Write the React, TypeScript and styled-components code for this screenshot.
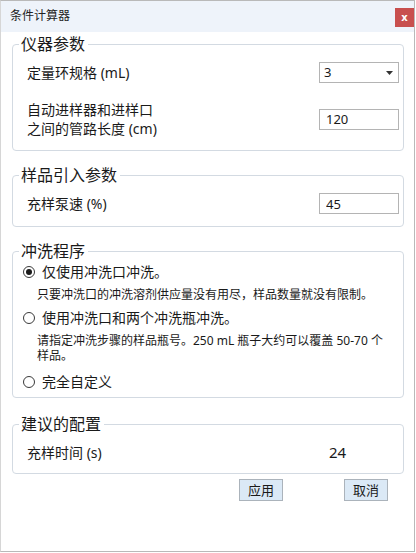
import React, { useState } from "react";
import styled, { createGlobalStyle } from "styled-components";

const GlobalStyle = createGlobalStyle`
    html, body {
        margin: 0;
        padding: 0;
        background: #ffffff;
    }
    body {
        font-family: "Noto Sans", "Noto Sans CJK SC", sans-serif;
        color: #1a1a1a;
    }
`

type Mode = "port" | "bottles" | "custom";

export default function App(){
    const [mode, setMode] = useState<Mode>("port");

    return(
        <>
            <GlobalStyle />
            <Window>
                <TitleBar>
                    <Title>条件计算器</Title>
                    <CloseBtn aria-label="close">x</CloseBtn>
                </TitleBar>

                <Body>
                    <Group $top={2}>
                        <Legend>仪器参数</Legend>
                        <FieldGrid $pt={8} $pb={12} $gap={17}>
                            <Label>定量环规格 (mL)</Label>
                            <Select>
                                <span>3</span>
                                <svg width="7" height="4" viewBox="0 0 7 4">
                                    <path d="M0 0 L7 0 L3.5 4 Z" fill="#333" />
                                </svg>
                            </Select>

                            <Label>自动进样器和进样口<br />之间的管路长度 (cm)</Label>
                            <Input type="text" defaultValue="120" />
                        </FieldGrid>
                    </Group>

                    <Group $top={14}>
                        <Legend>样品引入参数</Legend>
                        <FieldGrid $pt={8} $pb={12} $gap={0}>
                            <Label>充样泵速 (%)</Label>
                            <Input type="text" defaultValue="45" />
                        </FieldGrid>
                    </Group>

                    <Group $top={14}>
                        <Legend>冲洗程序</Legend>
                        <Options>
                            <Option>
                                <RadioLine onClick={() => setMode("port")}>
                                    <Radio $checked={mode === "port"} />
                                    仅使用冲洗口冲洗。
                                </RadioLine>
                                <Desc>只要冲洗口的冲洗溶剂供应量没有用尽，样品数量就没有限制。</Desc>
                            </Option>
                            <Option>
                                <RadioLine onClick={() => setMode("bottles")}>
                                    <Radio $checked={mode === "bottles"} />
                                    使用冲洗口和两个冲洗瓶冲洗。
                                </RadioLine>
                                <Desc>请指定冲洗步骤的样品瓶号。250 mL 瓶子大约可以覆盖 50-70 个样品。</Desc>
                            </Option>
                            <Option $extra={3}>
                                <RadioLine onClick={() => setMode("custom")}>
                                    <Radio $checked={mode === "custom"} />
                                    完全自定义
                                </RadioLine>
                            </Option>
                        </Options>
                    </Group>

                    <Group $top={16}>
                        <Legend>建议的配置</Legend>
                        <FieldGrid $pt={8} $pb={11} $gap={0}>
                            <Label>充样时间 (s)</Label>
                            <Value>24</Value>
                        </FieldGrid>
                    </Group>

                    <Buttons>
                        <Button>应用</Button>
                        <Button>取消</Button>
                    </Buttons>
                </Body>
            </Window>
        </>
    )
}

const Window = styled.div`
    width: 413px;
    height: 550px;
    border: 1px solid #b9b9b9;
    border-left-color: #d6d6d6;
    background: #ffffff;
    display: flex;
    flex-direction: column;
`
const TitleBar = styled.div`
    height: 31px;
    flex: none;
    background: #eef3fa;
    display: flex;
    align-items: flex-start;
    justify-content: space-between;
`
const Title = styled.span`
    font-size: 12px;
    line-height: 16px;
    margin: 7px 0 0 9px;
    color: #222;
`
const CloseBtn = styled.button`
    width: 19px;
    height: 19px;
    margin-top: 7px;
    padding: 0;
    border: none;
    background: #c84f4e;
    color: #ffffff;
    font-family: "DejaVu Sans", sans-serif;
    font-weight: bold;
    font-size: 10px;
    line-height: 17px;
    text-align: center;
`
const Body = styled.div`
    padding: 0 10px 0 11px;
    display: flex;
    flex-direction: column;
`
const Group = styled.fieldset<{ $top: number }>`
    margin: ${p => p.$top}px 0 0 0;
    padding: 0;
    border: 1px solid #d3dae2;
    border-radius: 4px;
    min-width: 0;
`
const Legend = styled.legend`
    margin-left: 6px;
    padding: 0 3px 0 2px;
    font-size: 16px;
    line-height: 20px;
    color: #1a1a1a;
`
const FieldGrid = styled.div<{ $pt: number; $pb: number; $gap: number }>`
    display: grid;
    grid-template-columns: 1fr 80px;
    align-items: center;
    row-gap: ${p => p.$gap}px;
    padding: ${p => p.$pt}px 4px ${p => p.$pb}px 14px;
`
const Label = styled.div`
    font-size: 14px;
    line-height: 19px;
    color: #1a1a1a;
`
const Select = styled.div`
    box-sizing: border-box;
    height: 21px;
    border: 1px solid #b4b4b4;
    display: flex;
    align-items: center;
    justify-content: space-between;
    padding: 0 5px 0 4px;
    font-size: 13px;
    line-height: 19px;
`
const Input = styled.input`
    box-sizing: border-box;
    width: 80px;
    height: 21px;
    margin: 0;
    border: 1px solid #b4b4b4;
    border-radius: 0;
    padding: 0 0 0 6px;
    font-family: "Noto Sans", "Noto Sans CJK SC", sans-serif;
    font-size: 13px;
    color: #1a1a1a;
    outline: none;
`
const Value = styled.div`
    font-size: 15px;
    line-height: 20px;
    padding-left: 10px;
    color: #1a1a1a;
`
const Options = styled.div`
    display: flex;
    flex-direction: column;
    gap: 6px;
    padding: 1px 8px 5px 10px;
`
const Option = styled.div<{ $extra?: number }>`
    display: flex;
    flex-direction: column;
    gap: 5px;
    margin-top: ${p => p.$extra ?? 0}px;
`
const RadioLine = styled.label`
    display: flex;
    align-items: center;
    gap: 7px;
    font-size: 14px;
    line-height: 20px;
    color: #1a1a1a;
    cursor: default;
`
const Radio = styled.span<{ $checked: boolean }>`
    box-sizing: border-box;
    width: 12px;
    height: 12px;
    flex: none;
    border: 1px solid #3a3a3a;
    border-radius: 50%;
    display: flex;
    align-items: center;
    justify-content: center;

    &::after {
        content: "";
        width: 6px;
        height: 6px;
        border-radius: 50%;
        background: #1a1a1a;
        display: ${p => p.$checked ? "block" : "none"};
    }
`
const Desc = styled.div`
    font-size: 12px;
    line-height: 15px;
    padding: 0 6px 0 14px;
    color: #1a1a1a;
`
const Buttons = styled.div`
    display: flex;
    justify-content: flex-end;
    gap: 61px;
    margin-top: 5px;
    padding-right: 16px;
`
const Button = styled.button`
    box-sizing: border-box;
    width: 44px;
    height: 22px;
    margin: 0;
    padding: 0;
    border: 1px solid #abb3bb;
    background: #dbe9f6;
    font-family: "Noto Sans", "Noto Sans CJK SC", sans-serif;
    font-size: 13px;
    line-height: 20px;
    color: #1a1a1a;
`
